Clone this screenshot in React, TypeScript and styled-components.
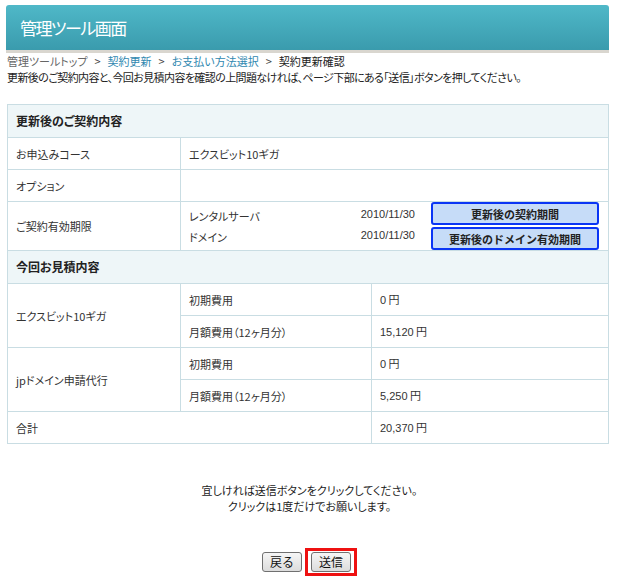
import React from "react";
import styled, { createGlobalStyle } from "styled-components";

const Global = createGlobalStyle`
  html, body { margin: 0; padding: 0; background: #fff; }
  body {
    font-family: "Noto Sans CJK JP", "Liberation Sans", sans-serif;
    font-size: 11px;
    line-height: 16px;
    color: #222;
    font-feature-settings: "palt";
  }
`;

const Page = styled.div`
  width: 620px;
  padding: 5px 11px 0 6px;
  box-sizing: border-box;
`;

const Header = styled.header`
  height: 45px;
  display: flex;
  align-items: center;
  padding-left: 14px;
  border-radius: 3px 3px 0 0;
  background: linear-gradient(#4fb8c8, #3a9bad);
  box-shadow: 0 3px 0 #d9d6cf;
`;

const Title = styled.h1`
  margin: 0;
  font-size: 17px;
  font-weight: normal;
  color: #fff;
  letter-spacing: -1.5px;
`;

const Crumbs = styled.nav`
  margin: 3px 0 0 1px;
  color: #333;
`;

const Crumb = styled.span<{ $link?: boolean; $muted?: boolean }>`
  color: ${(p) => (p.$link ? "#2f88b0" : p.$muted ? "#666" : "#222")};
`;

const Sep = styled.span`
  margin: 0 7px;
  color: #444;
`;

const Lead = styled.p`
  margin: 0 0 0 1px;
  letter-spacing: -0.6px;
`;

const Table = styled.table`
  margin: 19px 0 0 1px;
  width: 602px;
  border-collapse: collapse;
  border: 1px solid #c9dde3;
  color: #333;
`;

const SectionRow = styled.tr``;

const SectionCell = styled.th`
  height: 32px;
  padding: 0 8px;
  text-align: left;
  font-size: 12px;
  font-weight: bold;
  background: #eef6f8;
  border: 1px solid #c9dde3;
  color: #222;
`;

const Cell = styled.td<{ $w?: number }>`
  height: 31px;
  padding: 0 8px;
  border: 1px solid #c9dde3;
  vertical-align: middle;
  ${(p) => (p.$w ? `width: ${p.$w}px;` : "")}
`;

const TermCell = styled.td`
  height: 48px;
  padding: 0 9px 0 8px;
  border: 1px solid #c9dde3;
`;

const TermWrap = styled.div`
  display: flex;
  align-items: center;
`;

const TermList = styled.div`
  flex: 1;
  display: grid;
  grid-template-columns: 1fr auto;
  row-gap: 5px;
  padding-right: 16px;
`;

const DateText = styled.span`
  text-align: right;
  font-family: "Liberation Sans", sans-serif;
  font-size: 11px;
  position: relative;
  top: -2px;
`;

const BtnStack = styled.div`
  display: flex;
  flex-direction: column;
  gap: 2px;
`;

const BlueBtn = styled.button`
  width: 168px;
  height: 23px;
  padding: 0;
  border: 2.5px solid #0a35f5;
  border-radius: 3px;
  background: #c6dcf8;
  font: bold 11px "Noto Sans CJK JP", sans-serif;
  color: #222;
`;

const Money = styled.span`
  font-family: "Liberation Sans", sans-serif;
  font-size: 11px;
`;

const Note = styled.div`
  margin-top: 38px;
  text-align: center;
  padding-left: 4px;
`;

const Actions = styled.div`
  margin-top: 34px;
  display: flex;
  justify-content: center;
  align-items: center;
  gap: 3px;
  padding-left: 4px;
`;

const Btn = styled.button`
  height: 20px;
  padding: 0 7px;
  border: 1px solid #707070;
  border-radius: 3px;
  background: linear-gradient(#f6f6f6, #dcdcdc);
  font: 12px "Noto Sans CJK JP", sans-serif;
  line-height: 16px;
  color: #111;
`;

const Focus = styled.div`
  border: 3px solid #ee1111;
  padding: 1px 3px;
  display: flex;
`;

export default function App() {
  return (
    <>
      <Global />
      <Page>
        <Header>
          <Title>管理ツール画面</Title>
        </Header>
        <Crumbs>
          <Crumb $muted>管理ツールトップ</Crumb>
          <Sep>&gt;</Sep>
          <Crumb $link>契約更新</Crumb>
          <Sep>&gt;</Sep>
          <Crumb $link>お支払い方法選択</Crumb>
          <Sep>&gt;</Sep>
          <Crumb>契約更新確認</Crumb>
        </Crumbs>
        <Lead>
          更新後のご契約内容と、今回お見積内容を確認の上問題なければ、ページ下部にある「送信」ボタンを押してください。
        </Lead>
        <Table>
          <tbody>
            <SectionRow>
              <SectionCell colSpan={3}>更新後のご契約内容</SectionCell>
            </SectionRow>
            <tr>
              <Cell $w={156}>お申込みコース</Cell>
              <Cell colSpan={2}>エクスビット10ギガ</Cell>
            </tr>
            <tr>
              <Cell>オプション</Cell>
              <Cell colSpan={2}></Cell>
            </tr>
            <tr>
              <Cell>ご契約有効期限</Cell>
              <TermCell colSpan={2}>
                <TermWrap>
                  <TermList>
                    <span>レンタルサーバ</span>
                    <DateText>2010/11/30</DateText>
                    <span>ドメイン</span>
                    <DateText>2010/11/30</DateText>
                  </TermList>
                  <BtnStack>
                    <BlueBtn>更新後の契約期間</BlueBtn>
                    <BlueBtn>更新後のドメイン有効期間</BlueBtn>
                  </BtnStack>
                </TermWrap>
              </TermCell>
            </tr>
            <SectionRow>
              <SectionCell colSpan={3}>今回お見積内容</SectionCell>
            </SectionRow>
            <tr>
              <Cell rowSpan={2}>エクスビット10ギガ</Cell>
              <Cell $w={174}>初期費用</Cell>
              <Cell><Money>0</Money> 円</Cell>
            </tr>
            <tr>
              <Cell>月額費用（12ヶ月分）</Cell>
              <Cell><Money>15,120</Money> 円</Cell>
            </tr>
            <tr>
              <Cell rowSpan={2}>jpドメイン申請代行</Cell>
              <Cell>初期費用</Cell>
              <Cell><Money>0</Money> 円</Cell>
            </tr>
            <tr>
              <Cell>月額費用（12ヶ月分）</Cell>
              <Cell><Money>5,250</Money> 円</Cell>
            </tr>
            <tr>
              <Cell colSpan={2}>合計</Cell>
              <Cell><Money>20,370</Money> 円</Cell>
            </tr>
          </tbody>
        </Table>
        <Note>
          宜しければ送信ボタンをクリックしてください。
          <br />
          クリックは1度だけでお願いします。
        </Note>
        <Actions>
          <Btn>戻る</Btn>
          <Focus>
            <Btn>送信</Btn>
          </Focus>
        </Actions>
      </Page>
    </>
  );
}
